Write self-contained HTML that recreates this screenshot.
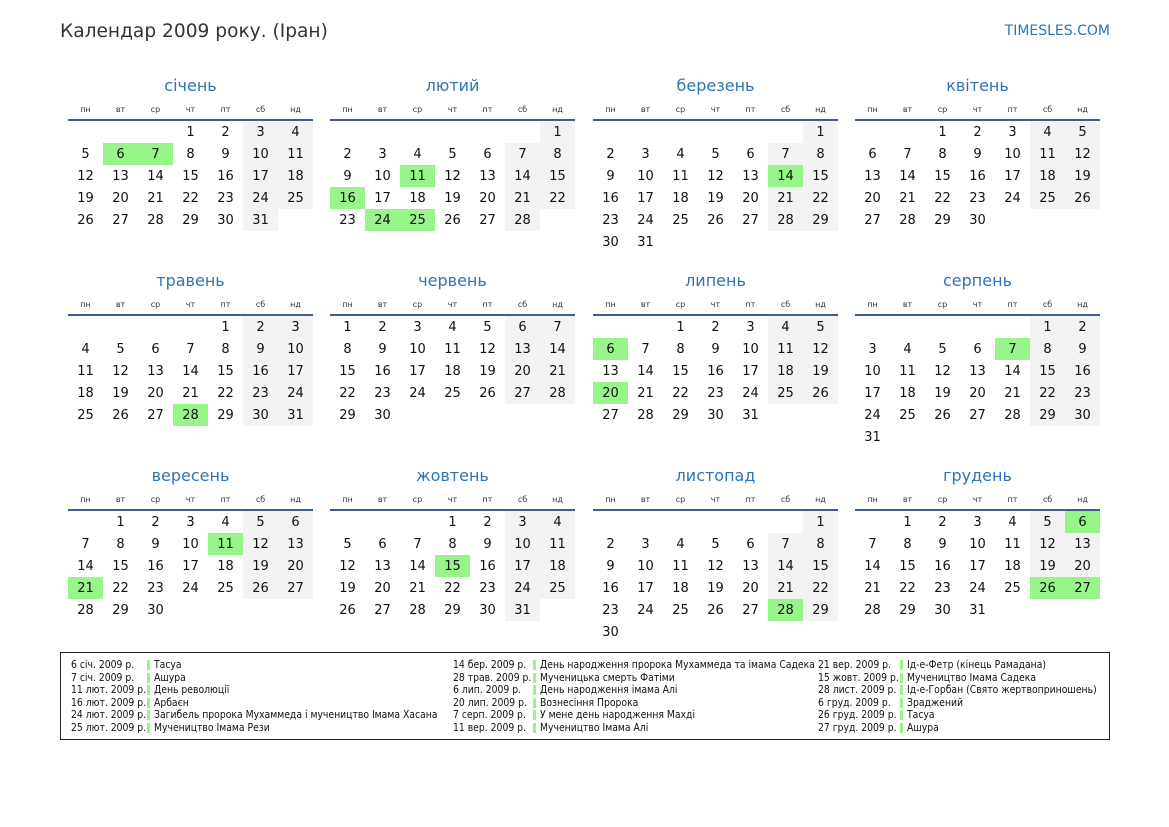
<!DOCTYPE html>
<html><head><meta charset="utf-8"><style>
*{margin:0;padding:0;box-sizing:border-box}
body{width:1169px;height:827px;background:#fff;position:relative;font-family:"DejaVu Sans","Liberation Sans",sans-serif;color:#111;overflow:hidden}
.ttl{position:absolute;left:60px;top:21px;font-size:18.6px;color:#333}
.site{position:absolute;right:59px;top:23px;font-size:14px;color:#2e75b6}
.m{position:absolute;width:245px}
.m h2{font-weight:normal;font-size:16px;color:#2e75b6;text-align:center;height:26px;line-height:26px}
.hd{display:flex;margin-top:2px;height:18px;line-height:18px}
.hd span{width:35px;text-align:center;font-size:8px;color:#333}
.ln{height:2px;background:#3f5e8f}
table{border-collapse:collapse;table-layout:fixed;width:245px}
td{width:35px;height:22px;text-align:center;font-size:13px;padding:0}
td.w{background:#f3f3f3}
td.h{background:#97f58a}
.lg{position:absolute;left:60px;top:652px;width:1050px;height:88px;border:1px solid #222;font-family:"DejaVu Sans Condensed","DejaVu Sans",sans-serif;font-stretch:condensed;font-size:10.3px;color:#111}
.lg .in{position:absolute;left:0;top:2px;width:100%;height:80px}
.r{position:absolute;height:12.5px;line-height:12.5px;white-space:nowrap}
.b{position:absolute;width:3px;height:10px;background:#97f58a}
</style></head><body>
<div class="ttl">Календар 2009 року. (Іран)</div>
<div class="site">TIMESLES.COM</div>

<div class="m" style="left:68px;top:73px"><h2>січень</h2><div class="hd"><span>пн</span><span>вт</span><span>ср</span><span>чт</span><span>пт</span><span>сб</span><span>нд</span></div><div class="ln"></div><table>
<tr><td></td><td></td><td></td><td>1</td><td>2</td><td class="w">3</td><td class="w">4</td></tr>
<tr><td>5</td><td class="h">6</td><td class="h">7</td><td>8</td><td>9</td><td class="w">10</td><td class="w">11</td></tr>
<tr><td>12</td><td>13</td><td>14</td><td>15</td><td>16</td><td class="w">17</td><td class="w">18</td></tr>
<tr><td>19</td><td>20</td><td>21</td><td>22</td><td>23</td><td class="w">24</td><td class="w">25</td></tr>
<tr><td>26</td><td>27</td><td>28</td><td>29</td><td>30</td><td class="w">31</td><td></td></tr>
</table></div>

<div class="m" style="left:330px;top:73px"><h2>лютий</h2><div class="hd"><span>пн</span><span>вт</span><span>ср</span><span>чт</span><span>пт</span><span>сб</span><span>нд</span></div><div class="ln"></div><table>
<tr><td></td><td></td><td></td><td></td><td></td><td></td><td class="w">1</td></tr>
<tr><td>2</td><td>3</td><td>4</td><td>5</td><td>6</td><td class="w">7</td><td class="w">8</td></tr>
<tr><td>9</td><td>10</td><td class="h">11</td><td>12</td><td>13</td><td class="w">14</td><td class="w">15</td></tr>
<tr><td class="h">16</td><td>17</td><td>18</td><td>19</td><td>20</td><td class="w">21</td><td class="w">22</td></tr>
<tr><td>23</td><td class="h">24</td><td class="h">25</td><td>26</td><td>27</td><td class="w">28</td><td></td></tr>
</table></div>

<div class="m" style="left:593px;top:73px"><h2>березень</h2><div class="hd"><span>пн</span><span>вт</span><span>ср</span><span>чт</span><span>пт</span><span>сб</span><span>нд</span></div><div class="ln"></div><table>
<tr><td></td><td></td><td></td><td></td><td></td><td></td><td class="w">1</td></tr>
<tr><td>2</td><td>3</td><td>4</td><td>5</td><td>6</td><td class="w">7</td><td class="w">8</td></tr>
<tr><td>9</td><td>10</td><td>11</td><td>12</td><td>13</td><td class="h">14</td><td class="w">15</td></tr>
<tr><td>16</td><td>17</td><td>18</td><td>19</td><td>20</td><td class="w">21</td><td class="w">22</td></tr>
<tr><td>23</td><td>24</td><td>25</td><td>26</td><td>27</td><td class="w">28</td><td class="w">29</td></tr>
<tr><td>30</td><td>31</td><td></td><td></td><td></td><td></td><td></td></tr>
</table></div>

<div class="m" style="left:855px;top:73px"><h2>квітень</h2><div class="hd"><span>пн</span><span>вт</span><span>ср</span><span>чт</span><span>пт</span><span>сб</span><span>нд</span></div><div class="ln"></div><table>
<tr><td></td><td></td><td>1</td><td>2</td><td>3</td><td class="w">4</td><td class="w">5</td></tr>
<tr><td>6</td><td>7</td><td>8</td><td>9</td><td>10</td><td class="w">11</td><td class="w">12</td></tr>
<tr><td>13</td><td>14</td><td>15</td><td>16</td><td>17</td><td class="w">18</td><td class="w">19</td></tr>
<tr><td>20</td><td>21</td><td>22</td><td>23</td><td>24</td><td class="w">25</td><td class="w">26</td></tr>
<tr><td>27</td><td>28</td><td>29</td><td>30</td><td></td><td></td><td></td></tr>
</table></div>

<div class="m" style="left:68px;top:268px"><h2>травень</h2><div class="hd"><span>пн</span><span>вт</span><span>ср</span><span>чт</span><span>пт</span><span>сб</span><span>нд</span></div><div class="ln"></div><table>
<tr><td></td><td></td><td></td><td></td><td>1</td><td class="w">2</td><td class="w">3</td></tr>
<tr><td>4</td><td>5</td><td>6</td><td>7</td><td>8</td><td class="w">9</td><td class="w">10</td></tr>
<tr><td>11</td><td>12</td><td>13</td><td>14</td><td>15</td><td class="w">16</td><td class="w">17</td></tr>
<tr><td>18</td><td>19</td><td>20</td><td>21</td><td>22</td><td class="w">23</td><td class="w">24</td></tr>
<tr><td>25</td><td>26</td><td>27</td><td class="h">28</td><td>29</td><td class="w">30</td><td class="w">31</td></tr>
</table></div>

<div class="m" style="left:330px;top:268px"><h2>червень</h2><div class="hd"><span>пн</span><span>вт</span><span>ср</span><span>чт</span><span>пт</span><span>сб</span><span>нд</span></div><div class="ln"></div><table>
<tr><td>1</td><td>2</td><td>3</td><td>4</td><td>5</td><td class="w">6</td><td class="w">7</td></tr>
<tr><td>8</td><td>9</td><td>10</td><td>11</td><td>12</td><td class="w">13</td><td class="w">14</td></tr>
<tr><td>15</td><td>16</td><td>17</td><td>18</td><td>19</td><td class="w">20</td><td class="w">21</td></tr>
<tr><td>22</td><td>23</td><td>24</td><td>25</td><td>26</td><td class="w">27</td><td class="w">28</td></tr>
<tr><td>29</td><td>30</td><td></td><td></td><td></td><td></td><td></td></tr>
</table></div>

<div class="m" style="left:593px;top:268px"><h2>липень</h2><div class="hd"><span>пн</span><span>вт</span><span>ср</span><span>чт</span><span>пт</span><span>сб</span><span>нд</span></div><div class="ln"></div><table>
<tr><td></td><td></td><td>1</td><td>2</td><td>3</td><td class="w">4</td><td class="w">5</td></tr>
<tr><td class="h">6</td><td>7</td><td>8</td><td>9</td><td>10</td><td class="w">11</td><td class="w">12</td></tr>
<tr><td>13</td><td>14</td><td>15</td><td>16</td><td>17</td><td class="w">18</td><td class="w">19</td></tr>
<tr><td class="h">20</td><td>21</td><td>22</td><td>23</td><td>24</td><td class="w">25</td><td class="w">26</td></tr>
<tr><td>27</td><td>28</td><td>29</td><td>30</td><td>31</td><td></td><td></td></tr>
</table></div>

<div class="m" style="left:855px;top:268px"><h2>серпень</h2><div class="hd"><span>пн</span><span>вт</span><span>ср</span><span>чт</span><span>пт</span><span>сб</span><span>нд</span></div><div class="ln"></div><table>
<tr><td></td><td></td><td></td><td></td><td></td><td class="w">1</td><td class="w">2</td></tr>
<tr><td>3</td><td>4</td><td>5</td><td>6</td><td class="h">7</td><td class="w">8</td><td class="w">9</td></tr>
<tr><td>10</td><td>11</td><td>12</td><td>13</td><td>14</td><td class="w">15</td><td class="w">16</td></tr>
<tr><td>17</td><td>18</td><td>19</td><td>20</td><td>21</td><td class="w">22</td><td class="w">23</td></tr>
<tr><td>24</td><td>25</td><td>26</td><td>27</td><td>28</td><td class="w">29</td><td class="w">30</td></tr>
<tr><td>31</td><td></td><td></td><td></td><td></td><td></td><td></td></tr>
</table></div>

<div class="m" style="left:68px;top:463px"><h2>вересень</h2><div class="hd"><span>пн</span><span>вт</span><span>ср</span><span>чт</span><span>пт</span><span>сб</span><span>нд</span></div><div class="ln"></div><table>
<tr><td></td><td>1</td><td>2</td><td>3</td><td>4</td><td class="w">5</td><td class="w">6</td></tr>
<tr><td>7</td><td>8</td><td>9</td><td>10</td><td class="h">11</td><td class="w">12</td><td class="w">13</td></tr>
<tr><td>14</td><td>15</td><td>16</td><td>17</td><td>18</td><td class="w">19</td><td class="w">20</td></tr>
<tr><td class="h">21</td><td>22</td><td>23</td><td>24</td><td>25</td><td class="w">26</td><td class="w">27</td></tr>
<tr><td>28</td><td>29</td><td>30</td><td></td><td></td><td></td><td></td></tr>
</table></div>

<div class="m" style="left:330px;top:463px"><h2>жовтень</h2><div class="hd"><span>пн</span><span>вт</span><span>ср</span><span>чт</span><span>пт</span><span>сб</span><span>нд</span></div><div class="ln"></div><table>
<tr><td></td><td></td><td></td><td>1</td><td>2</td><td class="w">3</td><td class="w">4</td></tr>
<tr><td>5</td><td>6</td><td>7</td><td>8</td><td>9</td><td class="w">10</td><td class="w">11</td></tr>
<tr><td>12</td><td>13</td><td>14</td><td class="h">15</td><td>16</td><td class="w">17</td><td class="w">18</td></tr>
<tr><td>19</td><td>20</td><td>21</td><td>22</td><td>23</td><td class="w">24</td><td class="w">25</td></tr>
<tr><td>26</td><td>27</td><td>28</td><td>29</td><td>30</td><td class="w">31</td><td></td></tr>
</table></div>

<div class="m" style="left:593px;top:463px"><h2>листопад</h2><div class="hd"><span>пн</span><span>вт</span><span>ср</span><span>чт</span><span>пт</span><span>сб</span><span>нд</span></div><div class="ln"></div><table>
<tr><td></td><td></td><td></td><td></td><td></td><td></td><td class="w">1</td></tr>
<tr><td>2</td><td>3</td><td>4</td><td>5</td><td>6</td><td class="w">7</td><td class="w">8</td></tr>
<tr><td>9</td><td>10</td><td>11</td><td>12</td><td>13</td><td class="w">14</td><td class="w">15</td></tr>
<tr><td>16</td><td>17</td><td>18</td><td>19</td><td>20</td><td class="w">21</td><td class="w">22</td></tr>
<tr><td>23</td><td>24</td><td>25</td><td>26</td><td>27</td><td class="h">28</td><td class="w">29</td></tr>
<tr><td>30</td><td></td><td></td><td></td><td></td><td></td><td></td></tr>
</table></div>

<div class="m" style="left:855px;top:463px"><h2>грудень</h2><div class="hd"><span>пн</span><span>вт</span><span>ср</span><span>чт</span><span>пт</span><span>сб</span><span>нд</span></div><div class="ln"></div><table>
<tr><td></td><td>1</td><td>2</td><td>3</td><td>4</td><td class="w">5</td><td class="h">6</td></tr>
<tr><td>7</td><td>8</td><td>9</td><td>10</td><td>11</td><td class="w">12</td><td class="w">13</td></tr>
<tr><td>14</td><td>15</td><td>16</td><td>17</td><td>18</td><td class="w">19</td><td class="w">20</td></tr>
<tr><td>21</td><td>22</td><td>23</td><td>24</td><td>25</td><td class="h">26</td><td class="h">27</td></tr>
<tr><td>28</td><td>29</td><td>30</td><td>31</td><td></td><td></td><td></td></tr>
</table></div>

<div class="lg"><div class="in">
<div class="r" style="left:10px;top:4px">6 січ. 2009 р.</div><div class="b" style="left:86px;top:5px"></div><div class="r" style="left:93px;top:4px">Тасуа</div>
<div class="r" style="left:10px;top:16.5px">7 січ. 2009 р.</div><div class="b" style="left:86px;top:17.5px"></div><div class="r" style="left:93px;top:16.5px">Ашура</div>
<div class="r" style="left:10px;top:29px">11 лют. 2009 р.</div><div class="b" style="left:86px;top:30px"></div><div class="r" style="left:93px;top:29px">День революції</div>
<div class="r" style="left:10px;top:41.5px">16 лют. 2009 р.</div><div class="b" style="left:86px;top:42.5px"></div><div class="r" style="left:93px;top:41.5px">Арбаєн</div>
<div class="r" style="left:10px;top:54px">24 лют. 2009 р.</div><div class="b" style="left:86px;top:55px"></div><div class="r" style="left:93px;top:54px">Загибель пророка Мухаммеда і мучеництво Імама Хасана</div>
<div class="r" style="left:10px;top:66.5px">25 лют. 2009 р.</div><div class="b" style="left:86px;top:67.5px"></div><div class="r" style="left:93px;top:66.5px">Мучеництво Імама Рези</div>

<div class="r" style="left:392px;top:4px">14 бер. 2009 р.</div><div class="b" style="left:472px;top:5px"></div><div class="r" style="left:479px;top:4px">День народження пророка Мухаммеда та імама Садека</div>
<div class="r" style="left:392px;top:16.5px">28 трав. 2009 р.</div><div class="b" style="left:472px;top:17.5px"></div><div class="r" style="left:479px;top:16.5px">Мученицька смерть Фатіми</div>
<div class="r" style="left:392px;top:29px">6 лип. 2009 р.</div><div class="b" style="left:472px;top:30px"></div><div class="r" style="left:479px;top:29px">День народження імама Алі</div>
<div class="r" style="left:392px;top:41.5px">20 лип. 2009 р.</div><div class="b" style="left:472px;top:42.5px"></div><div class="r" style="left:479px;top:41.5px">Вознесіння Пророка</div>
<div class="r" style="left:392px;top:54px">7 серп. 2009 р.</div><div class="b" style="left:472px;top:55px"></div><div class="r" style="left:479px;top:54px">У мене день народження Махді</div>
<div class="r" style="left:392px;top:66.5px">11 вер. 2009 р.</div><div class="b" style="left:472px;top:67.5px"></div><div class="r" style="left:479px;top:66.5px">Мучеництво Імама Алі</div>

<div class="r" style="left:757px;top:4px">21 вер. 2009 р.</div><div class="b" style="left:839px;top:5px"></div><div class="r" style="left:846px;top:4px">Ід-е-Фетр (кінець Рамадана)</div>
<div class="r" style="left:757px;top:16.5px">15 жовт. 2009 р.</div><div class="b" style="left:839px;top:17.5px"></div><div class="r" style="left:846px;top:16.5px">Мучеництво Імама Садека</div>
<div class="r" style="left:757px;top:29px">28 лист. 2009 р.</div><div class="b" style="left:839px;top:30px"></div><div class="r" style="left:846px;top:29px">Ід-е-Горбан (Свято жертвоприношень)</div>
<div class="r" style="left:757px;top:41.5px">6 груд. 2009 р.</div><div class="b" style="left:839px;top:42.5px"></div><div class="r" style="left:846px;top:41.5px">Зраджений</div>
<div class="r" style="left:757px;top:54px">26 груд. 2009 р.</div><div class="b" style="left:839px;top:55px"></div><div class="r" style="left:846px;top:54px">Тасуа</div>
<div class="r" style="left:757px;top:66.5px">27 груд. 2009 р.</div><div class="b" style="left:839px;top:67.5px"></div><div class="r" style="left:846px;top:66.5px">Ашура</div>
</div></div>
</body></html>
